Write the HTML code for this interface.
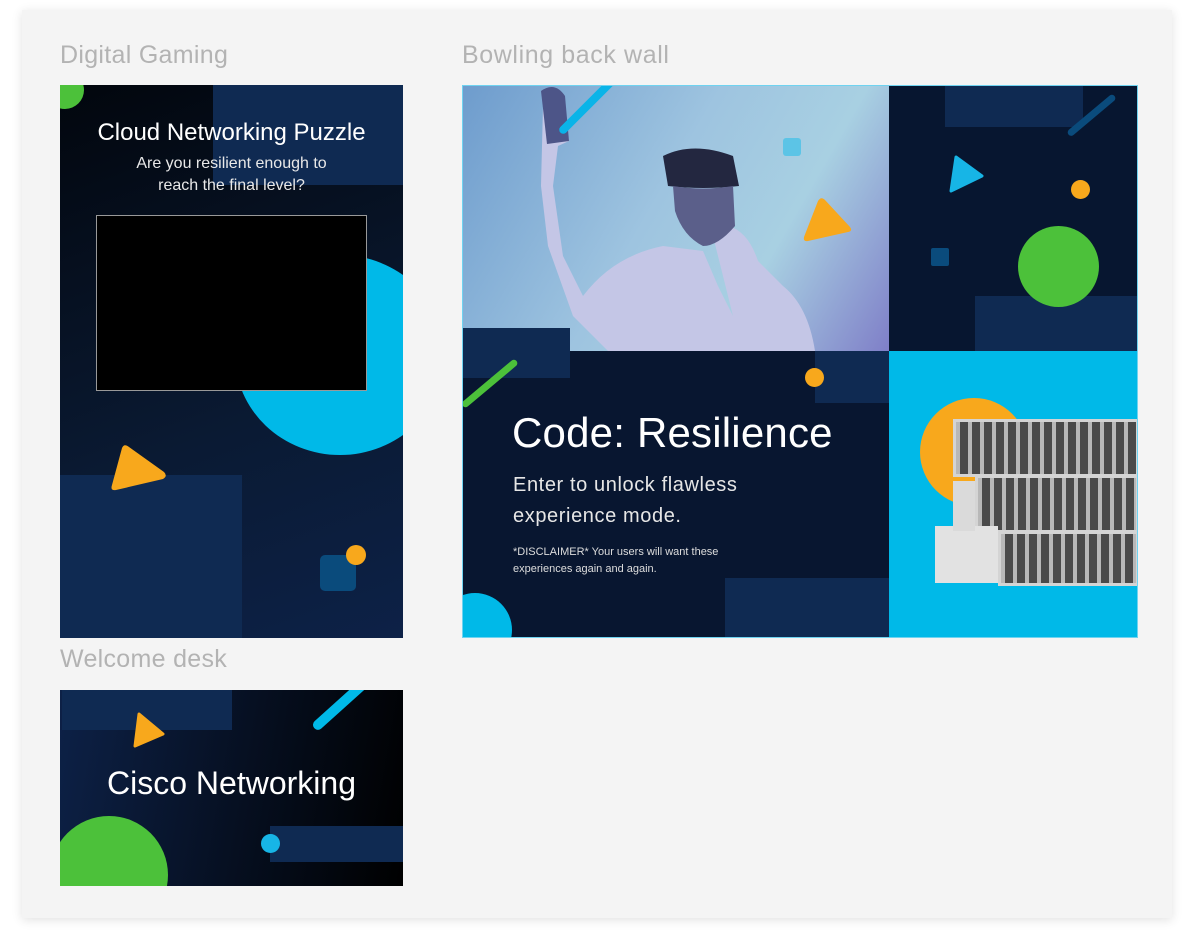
<!DOCTYPE html>
<html><head><style>
*{margin:0;padding:0;box-sizing:border-box}
body{width:1183px;height:942px;background:#fff;position:relative;overflow:hidden;font-family:"Liberation Sans",sans-serif}
.a{position:absolute}
.card{left:22px;top:10px;width:1150px;height:908px;background:#f4f4f4;box-shadow:0 2px 10px rgba(0,0,0,.12)}
.lbl{color:#b3b3b3;font-size:25px;letter-spacing:0.3px}
.panel{overflow:hidden}
.t{color:#fff}
</style></head><body>
<div class="a card"></div>
<div class="a lbl" style="left:60px;top:41px">Digital Gaming</div>
<div class="a lbl" style="left:462px;top:41px;letter-spacing:0.6px">Bowling back wall</div>
<div class="a lbl" style="left:60px;top:645px">Welcome desk</div>

<!-- Digital gaming -->
<div class="a panel" style="left:60px;top:85px;width:343px;height:553px;background:linear-gradient(160deg,#02060d 0%,#0a1a33 60%,#0d2147 100%)">
  <div class="a" style="left:153px;top:0;width:190px;height:100px;background:#0f2a52"></div>
  <div class="a" style="left:-14px;top:-14px;width:38px;height:38px;border-radius:50%;background:#4cc13a"></div>
  <div class="a" style="left:175px;top:170px;width:210px;height:200px;border-radius:50%;background:#00b9e8"></div>
  <div class="a" style="left:0;top:390px;width:182px;height:163px;background:#0f2a52"></div>
  <svg class="a" style="left:44px;top:355px" width="70" height="70"><path d="M18 8 Q20 3 25 7 L60 32 Q64 36 59 39 L12 50 Q6 51 8 45 Z" fill="#f8a81c"/></svg>
  <div class="a" style="left:260px;top:470px;width:36px;height:36px;border-radius:5px;background:#0a4b7c"></div>
  <div class="a" style="left:286px;top:460px;width:20px;height:20px;border-radius:50%;background:#f8a81c"></div>
  <div class="a" style="left:36px;top:130px;width:271px;height:176px;background:#000;border:1px solid #999"></div>
  <div class="a t" style="left:0;width:343px;top:34px;text-align:center;font-size:24px;letter-spacing:0px">Cloud Networking Puzzle</div>
  <div class="a t" style="left:0;width:343px;top:68px;text-align:center;font-size:16px;line-height:22px;color:#e8e8e8">Are you resilient enough to<br>reach the final level?</div>
</div>

<!-- Bowling -->
<div class="a panel" style="left:462px;top:85px;width:676px;height:553px;border:1px solid #6fd3f0;background:#081630">
  <div class="a" style="left:0;top:0;width:426px;height:265px;background:linear-gradient(120deg,#6e9ccd 0%,#9ec4e0 45%,#a8d0e2 70%,#7f7fc8 100%)"></div>
  <svg class="a" style="left:0;top:0" width="426" height="265">
    <path d="M80 20 Q90 0 100 12 L106 55 L95 60 L90 100 L100 170 L120 210 Q150 170 200 160 L240 165 L255 200 L270 230 L250 150 L265 140 Q285 145 295 175 L320 200 Q345 220 352 265 L145 265 L110 230 L85 160 L78 100 Z" fill="#c4c6e6"/>
    <path d="M78 5 Q92 -5 102 10 L106 55 L84 58 Z" fill="#4d5588"/>
    <path d="M200 70 Q230 55 270 70 L276 100 Q240 104 205 100 Z" fill="#232740"/>
    <path d="M210 100 Q240 105 270 100 L272 140 Q255 160 240 160 Q220 150 212 125 Z" fill="#5b5f8a"/>
  </svg>
  <div class="a" style="left:150px;top:-10px;width:8px;height:80px;border-radius:4px;background:#0ab4e8;transform:rotate(45deg);transform-origin:top"></div>
  <div class="a" style="left:320px;top:52px;width:18px;height:18px;border-radius:3px;background:#5cc4e6"></div>
  <svg class="a" style="left:335px;top:105px" width="60" height="60"><path d="M20 10 Q23 5 27 9 L52 36 Q55 40 50 41 L10 50 Q5 51 6 46 Z" fill="#f8a81c"/></svg>
  <div class="a" style="left:426px;top:0;width:250px;height:265px;background:#071630"></div>
  <div class="a" style="left:482px;top:0;width:138px;height:41px;background:#0f2a52"></div>
  <div class="a" style="left:512px;top:210px;width:164px;height:55px;background:#0f2a52"></div>
  <div class="a" style="left:648px;top:10px;width:7px;height:60px;border-radius:4px;background:#0a4b7c;transform:rotate(50deg);transform-origin:top"></div>
  <svg class="a" style="left:485px;top:65px" width="45" height="45"><path d="M8 6 L34 25 L3 40 Z" fill="#17b5e6" stroke="#17b5e6" stroke-width="3" stroke-linejoin="round"/></svg>
  <div class="a" style="left:608px;top:94px;width:19px;height:19px;border-radius:50%;background:#f8a81c"></div>
  <div class="a" style="left:468px;top:162px;width:18px;height:18px;border-radius:2px;background:#0a4b7c"></div>
  <div class="a" style="left:555px;top:140px;width:81px;height:81px;border-radius:50%;background:#4cc13a"></div>
  <div class="a" style="left:0;top:242px;width:107px;height:50px;background:#0f2a52"></div>
  <div class="a" style="left:352px;top:265px;width:74px;height:52px;background:#0f2a52"></div>
  <div class="a" style="left:262px;top:492px;width:164px;height:61px;background:#0f2a52"></div>
  <div class="a" style="left:50px;top:275px;width:7px;height:70px;border-radius:4px;background:#4cc13a;transform:rotate(50deg);transform-origin:top"></div>
  <div class="a" style="left:342px;top:282px;width:19px;height:19px;border-radius:50%;background:#f8a81c"></div>
  <div class="a" style="left:-25px;top:507px;width:74px;height:74px;border-radius:50%;background:#00b9e8"></div>
  <div class="a t" style="left:49px;top:323px;font-size:42px;letter-spacing:0.2px">Code: Resilience</div>
  <div class="a t" style="left:50px;top:384px;font-size:20px;line-height:31px;color:#e6e6e6;letter-spacing:0.6px">Enter to unlock flawless<br>experience mode.</div>
  <div class="a t" style="left:50px;top:458px;font-size:11px;line-height:17px;color:#ddd">*DISCLAIMER* Your users will want these<br>experiences again and again.</div>
  <div class="a" style="left:426px;top:265px;width:250px;height:288px;background:#00b9e8"></div>
  <div class="a" style="left:457px;top:312px;width:108px;height:108px;border-radius:50%;background:#f8a81c"></div>
  <div class="a" style="left:490px;top:333px;width:186px;height:58px;background:repeating-linear-gradient(90deg,#b8b8b8 0 4px,#4a4a4a 4px 12px);border:3px solid #d4d4d4"></div>
  <div class="a" style="left:512px;top:389px;width:164px;height:58px;background:repeating-linear-gradient(90deg,#b8b8b8 0 4px,#4a4a4a 4px 12px);border:3px solid #d4d4d4"></div>
  <div class="a" style="left:535px;top:445px;width:141px;height:55px;background:repeating-linear-gradient(90deg,#b8b8b8 0 4px,#4a4a4a 4px 12px);border:3px solid #d4d4d4"></div>
  <div class="a" style="left:472px;top:440px;width:63px;height:57px;background:#e2e2e2"></div>
  <div class="a" style="left:490px;top:395px;width:22px;height:50px;background:#dadada"></div>
</div>

<!-- Welcome -->
<div class="a panel" style="left:60px;top:690px;width:343px;height:196px;background:linear-gradient(100deg,#0d2147 0%,#050d1c 60%,#000 100%)">
  <div class="a" style="left:2px;top:0;width:170px;height:40px;background:#0f2a52"></div>
  <div class="a" style="left:210px;top:136px;width:133px;height:36px;background:#0f2a52"></div>
  <svg class="a" style="left:70px;top:18px" width="45" height="45"><path d="M9 6 L33 26 L5 38 Z" fill="#f8a81c" stroke="#f8a81c" stroke-width="3" stroke-linejoin="round"/></svg>
  <div class="a" style="left:305px;top:-12px;width:10px;height:75px;border-radius:5px;background:#00b9e8;transform:rotate(48deg);transform-origin:top"></div>
  <div class="a" style="left:-10px;top:126px;width:118px;height:118px;border-radius:50%;background:#4cc13a"></div>
  <div class="a" style="left:201px;top:144px;width:19px;height:19px;border-radius:50%;background:#17b5e6"></div>
  <div class="a t" style="left:0;width:343px;top:75px;text-align:center;font-size:32px;letter-spacing:0px">Cisco Networking</div>
</div>
</body></html>
